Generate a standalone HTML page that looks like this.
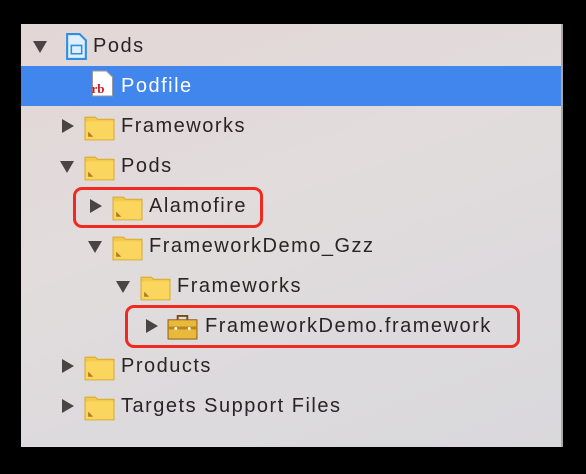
<!DOCTYPE html><html><head><style>
body{margin:0;width:586px;height:474px;background:#000;position:relative;overflow:hidden;font-family:"Liberation Sans",sans-serif}
#p{position:absolute;left:21px;top:24px;width:540px;height:423px;background:linear-gradient(160deg,#e3d6d6 0%,#e2dcdc 40%,#dcdadd 75%,#d9d8db 100%);border-right:2px solid #a8a8a8}
.r{position:absolute;left:0;width:540px;height:40px}
.sel{background:#4186ec}
.t{position:absolute;top:9px;font-size:20px;letter-spacing:1.5px;color:#2a2424;line-height:22px}
.sel .t{color:#fff}
.tri{position:absolute;width:0;height:0}
.right{border-left:12px solid #4a4444;border-top:7px solid transparent;border-bottom:7px solid transparent;top:13px}
.down{border-top:12px solid #4a4444;border-left:7px solid transparent;border-right:7px solid transparent;top:15px}
.f{position:absolute;top:8px;width:31px;height:27px}
.box{position:absolute;border:3.5px solid #f02a20;border-radius:9px}
</style></head><body><div id="p">
<svg width="0" height="0" style="position:absolute"><defs><symbol id="fold" viewBox="0 0 30 26"><path d="M1 3h10l2 2h16v20H1z" fill="#f2c94c" stroke="#d9a92a"/><rect x="1.5" y="7" width="27" height="17.5" fill="#fad65e"/><path d="M4 22l5 0-5-5z" fill="#b37a20"/></symbol></defs></svg>
<div class="r" style="top:2px"><div class="tri down" style="left:12px"></div>
<svg class="f" style="left:40px;top:7px" width="22" height="26" viewBox="0 0 22 26"><path d="M2 1h12l6 6v18H2z" fill="#dff0fc" stroke="#2e8ee0" stroke-width="2"/><path d="M6 12h10v8H6z" fill="none" stroke="#2e8ee0" stroke-width="1.5"/></svg>
<div class="t" style="left:72px">Pods</div></div>
<div class="r sel" style="top:42px">
<svg class="f" style="left:66px;top:4px" width="24" height="31" viewBox="0 0 22 27"><path d="M1 1h14l6 6v19H1z" fill="#fff" stroke="#999"/><text x="0" y="23" font-size="13" font-weight="bold" fill="#d21c1c" font-family="Liberation Serif">rb</text></svg>
<div class="t" style="left:100px">Podfile</div></div>
<div class="r" style="top:82px"><div class="tri right" style="left:41px"></div><svg class="f" style="left:63px"><use href="#fold"/></svg><div class="t" style="left:100px">Frameworks</div></div>
<div class="r" style="top:122px"><div class="tri down" style="left:39px"></div><svg class="f" style="left:63px"><use href="#fold"/></svg><div class="t" style="left:100px">Pods</div></div>
<div class="r" style="top:162px"><div class="tri right" style="left:69px"></div><svg class="f" style="left:91px"><use href="#fold"/></svg><div class="t" style="left:128px">Alamofire</div></div>
<div class="r" style="top:202px"><div class="tri down" style="left:67px"></div><svg class="f" style="left:91px"><use href="#fold"/></svg><div class="t" style="left:128px">FrameworkDemo_Gzz</div></div>
<div class="r" style="top:242px"><div class="tri down" style="left:95px"></div><svg class="f" style="left:119px"><use href="#fold"/></svg><div class="t" style="left:156px">Frameworks</div></div>
<div class="r" style="top:282px"><div class="tri right" style="left:125px"></div>
<svg class="f" style="left:146px" width="32" height="28" viewBox="0 0 32 28"><path d="M11 6V2h10v4" fill="none" stroke="#7a4a1a" stroke-width="2"/><rect x="1" y="6" width="30" height="20" fill="#e8b93a" stroke="#8a5a1a"/><rect x="1" y="13" width="30" height="3" fill="#b8861e"/><circle cx="9" cy="15" r="1.5" fill="#fff"/><circle cx="23" cy="15" r="1.5" fill="#fff"/></svg>
<div class="t" style="left:184px">FrameworkDemo.framework</div></div>
<div class="r" style="top:322px"><div class="tri right" style="left:41px"></div><svg class="f" style="left:63px"><use href="#fold"/></svg><div class="t" style="left:100px">Products</div></div>
<div class="r" style="top:362px"><div class="tri right" style="left:41px"></div><svg class="f" style="left:63px"><use href="#fold"/></svg><div class="t" style="left:100px">Targets Support Files</div></div>
<div class="box" style="left:52px;top:163px;width:184px;height:35px"></div>
<div class="box" style="left:104px;top:281px;width:389px;height:37px"></div>
</div></body></html>
